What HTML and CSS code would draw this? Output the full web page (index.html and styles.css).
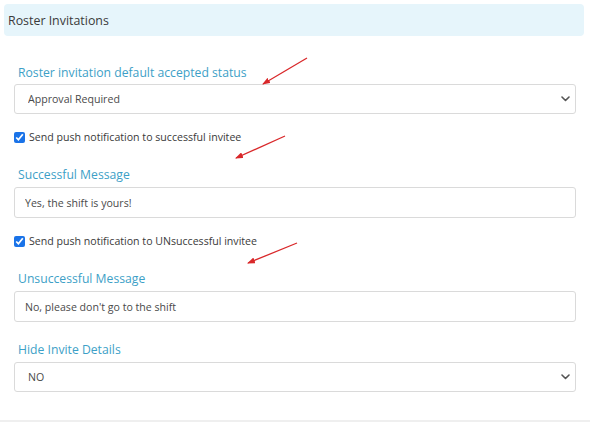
FILE: index.html
```html
<!DOCTYPE html>
<html>
<head>
<meta charset="utf-8">
<link rel="stylesheet" href="styles.css">
</head>
<body>
<div class="page">
  <div class="panel-head">Roster Invitations</div>
  <div class="form">
    <label class="field-label">Roster invitation default accepted status</label>
    <div class="select-wrap">
      <select class="control">
        <option>Approval Required</option>
      </select>
      <svg class="chev" width="9" height="6" viewBox="0 0 9 6"><path d="M1 1 L4.5 4.5 L8 1" fill="none" stroke="#555" stroke-width="1.6" stroke-linecap="round" stroke-linejoin="round"/></svg>
    </div>

    <label class="check-row"><input type="checkbox" checked><span>Send push notification to successful invitee</span></label>

    <label class="field-label">Successful Message</label>
    <input class="control text" type="text" value="Yes, the shift is yours!">

    <label class="check-row"><input type="checkbox" checked><span>Send push notification to UNsuccessful invitee</span></label>

    <label class="field-label">Unsuccessful Message</label>
    <input class="control text" type="text" value="No, please don't go to the shift">

    <label class="field-label">Hide Invite Details</label>
    <div class="select-wrap">
      <select class="control">
        <option>NO</option>
      </select>
      <svg class="chev" width="9" height="6" viewBox="0 0 9 6"><path d="M1 1 L4.5 4.5 L8 1" fill="none" stroke="#555" stroke-width="1.6" stroke-linecap="round" stroke-linejoin="round"/></svg>
    </div>
  </div>

  <svg class="arrows" width="590" height="423" viewBox="0 0 590 423">
    <defs>
      <marker id="ah" markerWidth="8" markerHeight="6" refX="7" refY="3" orient="auto" markerUnits="userSpaceOnUse">
        <path d="M0 0 L8 3 L0 6 Z" fill="#d9282a"/>
      </marker>
    </defs>
    <line x1="307" y1="58" x2="263" y2="84" stroke="#d9282a" stroke-width="1.3" marker-end="url(#ah)"/>
    <line x1="285" y1="136" x2="236" y2="158" stroke="#d9282a" stroke-width="1.3" marker-end="url(#ah)"/>
    <line x1="297" y1="243" x2="248" y2="263" stroke="#d9282a" stroke-width="1.3" marker-end="url(#ah)"/>
  </svg>
</div>
</body>
</html>
```

FILE: styles.css
```css
* { box-sizing: border-box; }
html, body {
  margin: 0;
  padding: 0;
  background: #fff;
}
body {
  font-family: "Open Sans", "Noto Sans", sans-serif;
  color: #444;
}
.page {
  position: relative;
  width: 590px;
  height: 423px;
  overflow: hidden;
}
.panel-head {
  margin: 4px 6px 0 4px;
  height: 32px;
  line-height: 32px;
  padding: 1px 0 0 4px;
  background: #e6f5fb;
  border-radius: 4px;
  font-size: 12.4px;
  color: #3a3a3a;
}
.form {
  display: flex;
  flex-direction: column;
  padding: 27px 14px 28px 14px;
  border-bottom: 2px solid #efefef;
}
.field-label {
  display: block;
  height: 20px;
  line-height: 20px;
  padding-left: 4px;
  font-size: 12.2px;
  color: #3d9fc7;
  margin-bottom: 1px;
}
.check-row + .field-label,
.select-wrap + .field-label,
.text + .field-label { margin-top: 18px; }
.check-row + .field-label,
.text + .field-label { margin-bottom: 2px; }
.select-wrap {
  position: relative;
}
.control {
  display: block;
  width: 100%;
  height: 30px;
  margin: 0;
  border: 1px solid #dadada;
  border-radius: 3px;
  background: #fff;
  font-family: "Open Sans", "Noto Sans", sans-serif;
  font-size: 10.6px;
  color: #4a4a4a;
  padding: 0 13px;
  outline: none;
}
select.control {
  appearance: none;
  -webkit-appearance: none;
}
.text { height: 31px; padding: 0 10px; }
.chev {
  position: absolute;
  right: 6px;
  top: 12px;
}
.check-row {
  display: flex;
  align-items: center;
  height: 20px;
  margin-top: 13px;
  font-size: 10.6px;
  color: #3a3a3a;
}
.check-row input {
  width: 11px;
  height: 11px;
  margin: 0 4px 0 0;
  accent-color: #1a73e8;
}
.arrows {
  position: absolute;
  left: 0;
  top: 0;
  pointer-events: none;
}
```
